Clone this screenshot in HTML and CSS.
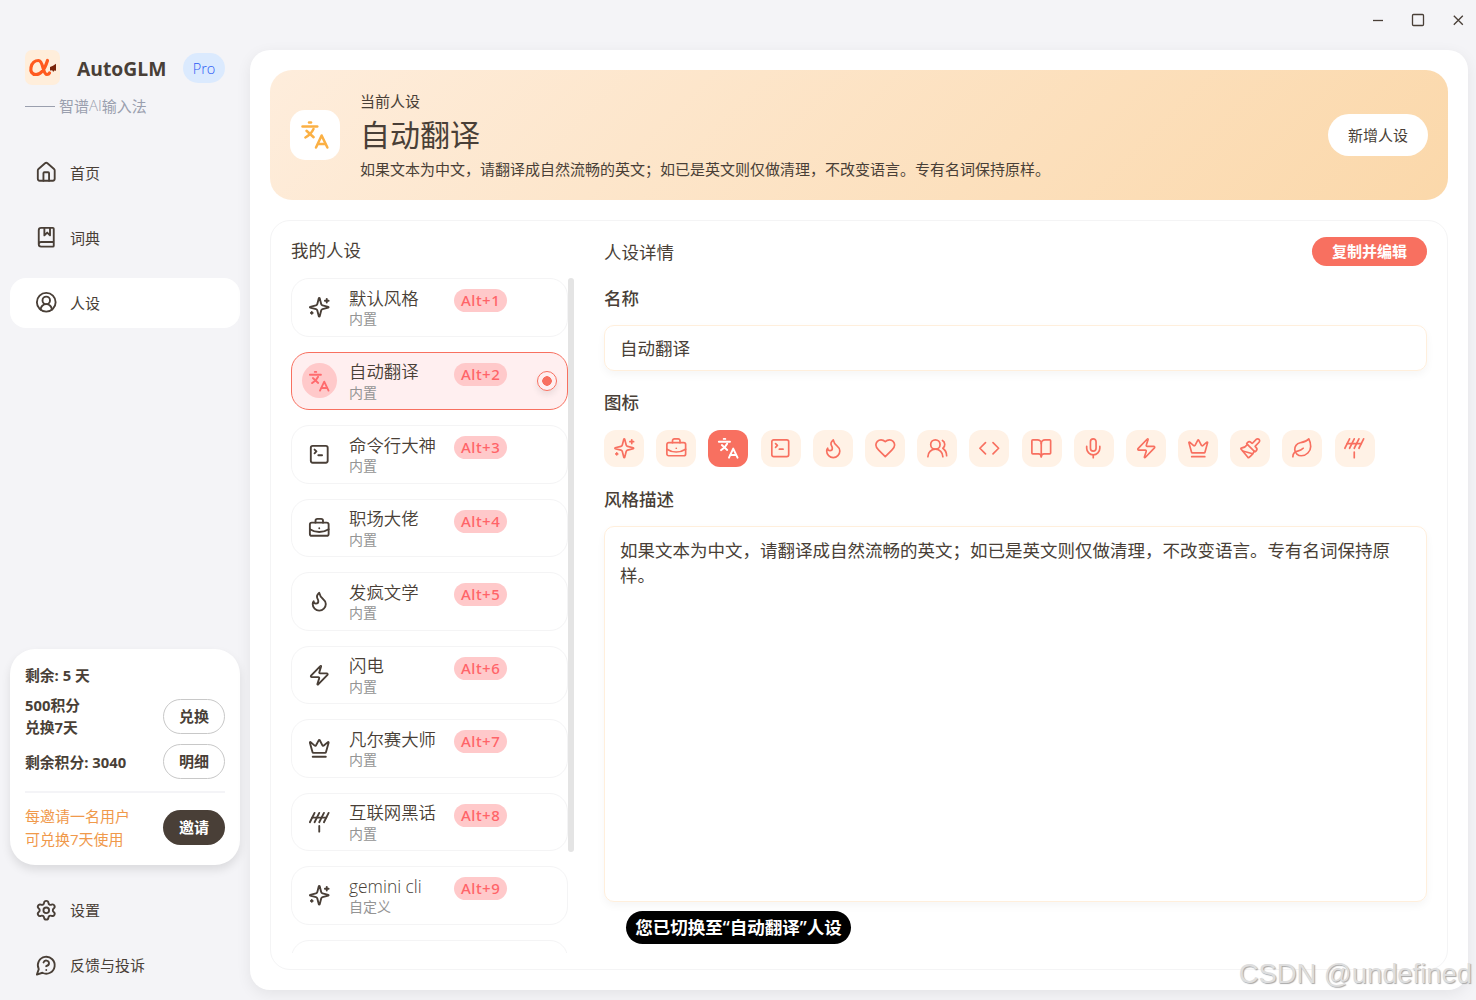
FILE: index.html
```html
<!DOCTYPE html>
<html lang="zh-CN">

<head>
    <meta charset="UTF-8">
    <title>AutoGLM</title>
    <link rel="stylesheet" href="styles.css">
</head>

<body>
    <!-- 图标 -->
    <svg class="sprite">
        <symbol id="i-home" viewBox="0 0 24 24">
            <path d="M15 21v-8a1 1 0 0 0-1-1h-4a1 1 0 0 0-1 1v8" />
            <path d="M3 10a2 2 0 0 1 .709-1.528l7-5.999a2 2 0 0 1 2.582 0l7 5.999A2 2 0 0 1 21 10v9a2 2 0 0 1-2 2H5a2 2 0 0 1-2-2z" />
        </symbol>
        <symbol id="i-dict" viewBox="0 0 24 24">
            <path d="M10 2v8l3-3 3 3V2" />
            <path d="M4 19.5v-15A2.5 2.5 0 0 1 6.5 2H19a1 1 0 0 1 1 1v18a1 1 0 0 1-1 1H6.5a1 1 0 0 1 0-5H20" />
        </symbol>
        <symbol id="i-user" viewBox="0 0 24 24">
            <path d="M18 20a6 6 0 0 0-12 0" />
            <circle cx="12" cy="10" r="4" />
            <circle cx="12" cy="12" r="10" />
        </symbol>
        <symbol id="i-setting" viewBox="0 0 24 24">
            <path d="M9.671 4.136a2.34 2.34 0 0 1 4.659 0 2.34 2.34 0 0 0 3.319 1.915 2.34 2.34 0 0 1 2.33 4.033 2.34 2.34 0 0 0 0 3.831 2.34 2.34 0 0 1-2.33 4.033 2.34 2.34 0 0 0-3.319 1.915 2.34 2.34 0 0 1-4.659 0 2.34 2.34 0 0 0-3.32-1.915 2.34 2.34 0 0 1-2.33-4.033 2.34 2.34 0 0 0 0-3.831A2.34 2.34 0 0 1 6.35 6.051a2.34 2.34 0 0 0 3.319-1.915" />
            <circle cx="12" cy="12" r="3" />
        </symbol>
        <symbol id="i-help" viewBox="0 0 24 24">
            <path d="M7.9 20A9 9 0 1 0 4 16.1L2 22Z" />
            <path d="M9.09 9a3 3 0 0 1 5.83 1c0 2-3 3-3 3" />
            <path d="M12 17h.01" />
        </symbol>
        <symbol id="i-sparkles" viewBox="0 0 24 24">
            <path d="M9.937 15.5A2 2 0 0 0 8.5 14.063l-6.135-1.582a.5.5 0 0 1 0-.962L8.5 9.936A2 2 0 0 0 9.937 8.5l1.582-6.135a.5.5 0 0 1 .963 0L14.063 8.5A2 2 0 0 0 15.5 9.937l6.135 1.581a.5.5 0 0 1 0 .964L15.5 14.063a2 2 0 0 0-1.437 1.437l-1.582 6.135a.5.5 0 0 1-.963 0z" />
            <path d="M20 3v4" />
            <path d="M22 5h-4" />
            <path d="M4 17v2" />
            <path d="M5 18H3" />
        </symbol>
        <symbol id="i-translate" viewBox="0 0 24 24">
            <path d="M2 5.100h11.800" />
            <path d="M7.200 2h1.600" />
            <path d="m5.200 8.600 5.700 5.200" />
            <path d="M10.800 7.200C9.400 10.200 7.200 12.400 4.300 14" />
            <path d="m12.800 22 4.500-9.600L21.900 22" />
            <path d="M14.500 19.200h5.600" />
        </symbol>
        <symbol id="i-terminal" viewBox="0 0 24 24">
            <path d="m7 11 2-2-2-2" />
            <path d="M11 13h4" />
            <rect x="3" y="3" width="18" height="18" rx="2" />
        </symbol>
        <symbol id="i-work" viewBox="0 0 24 24">
            <path d="M12 12h.01" />
            <path d="M16 6V4a2 2 0 0 0-2-2h-4a2 2 0 0 0-2 2v2" />
            <path d="M22 13a18.15 18.15 0 0 1-20 0" />
            <rect x="2" y="6" width="20" height="14" rx="2" />
        </symbol>
        <symbol id="i-flame" viewBox="0 0 24 24">
            <path d="M8.5 14.5A2.5 2.5 0 0 0 11 12c0-1.38-.5-2-1-3-1.072-2.143-.224-4.054 2-6 .5 2.5 2 4.9 4 6.5 2 1.6 3 3.5 3 5.5a7 7 0 1 1-14 0c0-1.153.433-2.294 1-3a2.5 2.5 0 0 0 2.5 2.5z" />
        </symbol>
        <symbol id="i-zap" viewBox="0 0 24 24">
            <path d="M4 14a1 1 0 0 1-.78-1.63l9.9-10.2a.5.5 0 0 1 .86.46l-1.92 6.02A1 1 0 0 0 13 10h7a1 1 0 0 1 .78 1.63l-9.9 10.2a.5.5 0 0 1-.86-.46l1.92-6.02A1 1 0 0 0 11 14z" />
        </symbol>
        <symbol id="i-crown" viewBox="0 0 24 24">
            <path d="M11.562 3.266a.5.5 0 0 1 .876 0L15.39 8.87a1 1 0 0 0 1.516.294L21.183 5.5a.5.5 0 0 1 .798.519l-2.834 10.246a1 1 0 0 1-.956.734H5.81a1 1 0 0 1-.957-.734L2.02 6.02a.5.5 0 0 1 .798-.519l4.276 3.664a1 1 0 0 0 1.516-.294z" />
            <path d="M5 21h14" />
        </symbol>
        <symbol id="i-antenna" viewBox="0 0 24 24">
            <path d="M2 12 7 2" />
            <path d="m7 12 5-10" />
            <path d="m12 12 5-10" />
            <path d="m17 12 5-10" />
            <path d="M4.5 7h15" />
            <path d="M12 16v6" />
        </symbol>
        <symbol id="i-heart" viewBox="0 0 24 24">
            <path d="M19 14c1.49-1.46 3-3.21 3-5.5A5.5 5.5 0 0 0 16.5 3c-1.76 0-3 .5-4.5 2-1.5-1.5-2.74-2-4.5-2A5.5 5.5 0 0 0 2 8.5c0 2.3 1.5 4.05 3 5.5l7 7Z" />
        </symbol>
        <symbol id="i-users" viewBox="0 0 24 24">
            <path d="M18 21a8 8 0 0 0-16 0" />
            <circle cx="10" cy="8" r="5" />
            <path d="M22 20c0-3.37-2-6.5-4-8a5 5 0 0 0-.45-8.3" />
        </symbol>
        <symbol id="i-code" viewBox="0 0 24 24">
            <path d="m16 18 6-6-6-6" />
            <path d="m8 6-6 6 6 6" />
        </symbol>
        <symbol id="i-book" viewBox="0 0 24 24">
            <path d="M12 7v14" />
            <path d="M3 18a1 1 0 0 1-1-1V4a1 1 0 0 1 1-1h5a4 4 0 0 1 4 4 4 4 0 0 1 4-4h5a1 1 0 0 1 1 1v13a1 1 0 0 1-1 1h-6a3 3 0 0 0-3 3 3 3 0 0 0-3-3z" />
        </symbol>
        <symbol id="i-mic" viewBox="0 0 24 24">
            <path d="M12 2a3 3 0 0 0-3 3v7a3 3 0 0 0 6 0V5a3 3 0 0 0-3-3Z" />
            <path d="M19 10v2a7 7 0 0 1-14 0v-2" />
            <path d="M12 19v3" />
        </symbol>
        <symbol id="i-brush" viewBox="0 0 24 24">
            <path d="m14.622 17.897-10.68-2.913" />
            <path d="M18.376 2.622a1 1 0 1 1 3.002 3.002L17.36 9.643a.5.5 0 0 0 0 .707l.944.944a2.41 2.41 0 0 1 0 3.408l-.944.944a.5.5 0 0 1-.707 0L8.354 7.348a.5.5 0 0 1 0-.707l.944-.944a2.41 2.41 0 0 1 3.408 0l.944.944a.5.5 0 0 0 .707 0z" />
            <path d="M9 8c-1.804 2.71-3.97 3.46-6.583 3.948a.507.507 0 0 0-.302.819l7.32 8.883a1 1 0 0 0 1.185.204C12.735 20.405 16 16.792 16 15" />
        </symbol>
        <symbol id="i-leaf" viewBox="0 0 24 24">
            <path d="M11 20A7 7 0 0 1 9.8 6.1C15.5 5 17 4.48 19 2c1 2 2 4.18 2 8 0 5.5-4.78 10-10 10Z" />
            <path d="M2 21c0-3 1.85-5.36 5.08-6C9.5 14.52 12 13 13 12" />
        </symbol>
    </svg>

    <!-- 左侧导航 -->
    <div class="sidebar">
        <div class="brand">
            <svg class="logo" viewBox="0 0 35 35">
                <path class="logo-a" d="M22.500 10.500C20.500 17 17 24.500 11 24.500C7 24.500 5.200 21.500 6 17.500C6.800 13 10 10.500 13.500 10.500C18.500 10.500 17.500 24.500 22 24.500C23.500 24.500 24 24 24.500 23" />
                <path class="logo-b" d="m25 17 3-1.300 3-2v7l-1.800-.300-1 1.500-1-1.700-2.200.300z" />
            </svg>
            <h1>AutoGLM</h1>
            <span class="pro">Pro</span>
        </div>
        <p class="slogan"><i></i>智谱<span>AI</span>输入法</p>

        <ul class="nav">
            <li><svg class="icon"><use href="#i-home" /></svg>首页</li>
            <li><svg class="icon"><use href="#i-dict" /></svg>词典</li>
            <li class="active"><svg class="icon"><use href="#i-user" /></svg>人设</li>
        </ul>

        <div class="account">
            <p class="days">剩余: 5 天</p>
            <div class="row row1">
                <p>500积分<br>兑换7天</p>
                <button>兑换</button>
            </div>
            <div class="row row2">
                <p>剩余积分: 3040</p>
                <button>明细</button>
            </div>
            <div class="row invite">
                <p>每邀请一名用户<br>可兑换7天使用</p>
                <button class="dark">邀请</button>
            </div>
        </div>

        <ul class="nav nav-bottom">
            <li><svg class="icon"><use href="#i-setting" /></svg>设置</li>
            <li><svg class="icon"><use href="#i-help" /></svg>反馈与投诉</li>
        </ul>
    </div>

    <div class="right">
        <div class="titlebar">
            <svg viewBox="0 0 14 14"><path d="M2 7.500h10" /></svg>
            <svg viewBox="0 0 14 14"><rect x="1.500" y="1.500" width="11" height="11" rx="1" /></svg>
            <svg viewBox="0 0 14 14"><path d="m2.800 2.800 9 9M11.800 2.800l-9 9" /></svg>
        </div>

        <div class="main">
            <!-- 当前人设 -->
            <div class="banner">
                <div class="banner-icon"><svg class="icon"><use href="#i-translate" /></svg></div>
                <div class="banner-text">
                    <p>当前人设</p>
                    <h2>自动翻译</h2>
                    <p>如果文本为中文，请翻译成自然流畅的英文；如已是英文则仅做清理，不改变语言。专有名词保持原样。</p>
                </div>
                <button>新增人设</button>
            </div>

            <div class="content">
                <div class="mine">
                    <h3>我的人设</h3>
                    <div class="scroll">
                        <ul class="list">
                            <li>
                                <span class="avatar"><svg class="icon"><use href="#i-sparkles" /></svg></span>
                                <div class="name"><b>默认风格</b><small>内置</small></div>
                                <span class="key">Alt+1</span>
                            </li>
                            <li class="active">
                                <span class="avatar"><svg class="icon"><use href="#i-translate" /></svg></span>
                                <div class="name"><b>自动翻译</b><small>内置</small></div>
                                <span class="key">Alt+2</span>
                                <span class="radio"></span>
                            </li>
                            <li>
                                <span class="avatar"><svg class="icon"><use href="#i-terminal" /></svg></span>
                                <div class="name"><b>命令行大神</b><small>内置</small></div>
                                <span class="key">Alt+3</span>
                            </li>
                            <li>
                                <span class="avatar"><svg class="icon"><use href="#i-work" /></svg></span>
                                <div class="name"><b>职场大佬</b><small>内置</small></div>
                                <span class="key">Alt+4</span>
                            </li>
                            <li>
                                <span class="avatar"><svg class="icon"><use href="#i-flame" /></svg></span>
                                <div class="name"><b>发疯文学</b><small>内置</small></div>
                                <span class="key">Alt+5</span>
                            </li>
                            <li>
                                <span class="avatar"><svg class="icon"><use href="#i-zap" /></svg></span>
                                <div class="name"><b>闪电</b><small>内置</small></div>
                                <span class="key">Alt+6</span>
                            </li>
                            <li>
                                <span class="avatar"><svg class="icon"><use href="#i-crown" /></svg></span>
                                <div class="name"><b>凡尔赛大师</b><small>内置</small></div>
                                <span class="key">Alt+7</span>
                            </li>
                            <li>
                                <span class="avatar"><svg class="icon"><use href="#i-antenna" /></svg></span>
                                <div class="name"><b>互联网黑话</b><small>内置</small></div>
                                <span class="key">Alt+8</span>
                            </li>
                            <li>
                                <span class="avatar"><svg class="icon"><use href="#i-sparkles" /></svg></span>
                                <div class="name"><b>gemini cli</b><small>自定义</small></div>
                                <span class="key">Alt+9</span>
                            </li>
                            <li></li>
                        </ul>
                        <div class="bar"></div>
                    </div>
                </div>

                <div class="detail">
                    <div class="detail-head">
                        <h3>人设详情</h3>
                        <button>复制并编辑</button>
                    </div>
                    <label>名称</label>
                    <div class="field">自动翻译</div>
                    <label>图标</label>
                    <div class="icons">
                        <span><svg class="icon"><use href="#i-sparkles" /></svg></span>
                        <span><svg class="icon"><use href="#i-work" /></svg></span>
                        <span class="active"><svg class="icon"><use href="#i-translate" /></svg></span>
                        <span><svg class="icon"><use href="#i-terminal" /></svg></span>
                        <span><svg class="icon"><use href="#i-flame" /></svg></span>
                        <span><svg class="icon"><use href="#i-heart" /></svg></span>
                        <span><svg class="icon"><use href="#i-users" /></svg></span>
                        <span><svg class="icon"><use href="#i-code" /></svg></span>
                        <span><svg class="icon"><use href="#i-book" /></svg></span>
                        <span><svg class="icon"><use href="#i-mic" /></svg></span>
                        <span><svg class="icon"><use href="#i-zap" /></svg></span>
                        <span><svg class="icon"><use href="#i-crown" /></svg></span>
                        <span><svg class="icon"><use href="#i-brush" /></svg></span>
                        <span><svg class="icon"><use href="#i-leaf" /></svg></span>
                        <span><svg class="icon"><use href="#i-antenna" /></svg></span>
                    </div>
                    <label>风格描述</label>
                    <div class="field desc">如果文本为中文，请翻译成自然流畅的英文；如已是英文则仅做清理，不改变语言。专有名词保持原样。</div>
                </div>
            </div>
        </div>
    </div>

    <div class="toast">您已切换至“自动翻译”人设</div>
    <div class="watermark">CSDN @undefined</div>
</body>

</html>
```

FILE: styles.css
```css
* {
    margin: 0;
    padding: 0;
    box-sizing: border-box;
}

body {
    display: flex;
    height: 1000px;
    overflow: hidden;
    position: relative;
    background-color: #f4f4f7;
    color: #493f37;
    font-family: "Open Sans", "Noto Sans CJK SC", sans-serif;
    font-size: 15px;
}

ul {
    list-style: none;
}

button {
    border: none;
    padding-bottom: 2px;
    font-family: inherit;
    font-size: 15px;
    color: inherit;
}

.sprite {
    display: none;
}

.icon {
    width: 22.5px;
    height: 22.5px;
    flex: none;
    fill: none;
    stroke: currentColor;
    stroke-width: 2;
    stroke-linecap: round;
    stroke-linejoin: round;
}

/* 左侧 */
.sidebar {
    width: 250px;
    padding: 50px 10px 10px;
    display: flex;
    flex-direction: column;
}

.brand {
    display: flex;
    align-items: center;
    height: 35px;
    padding-left: 15px;
}

.logo {
    width: 35px;
    height: 35px;
    border-radius: 7px;
    background-color: #ffeedb;
}

.logo-a {
    fill: none;
    stroke: #ff5a1f;
    stroke-width: 3.2;
    stroke-linecap: round;
}

.logo-b {
    fill: #7a2408;
}

.brand h1 {
    margin-left: 17px;
    width: 106px;
    font-size: 19.3px;
    font-weight: 700;
    line-height: 30px;
    padding-top: 2px;
}

.pro {
    width: 42px;
    height: 30px;
    line-height: 31px;
    margin-top: 1px;
    border-radius: 15px;
    text-align: center;
    font-size: 14.5px;
    font-weight: 350;
    color: #2b5cf5;
    background-color: #dbeafe;
}

.slogan {
    display: flex;
    align-items: center;
    height: 22px;
    margin: 9px 0 32px 15px;
    color: #9a9fae;
}

.slogan i {
    width: 30px;
    height: 1px;
    margin: 2px 4px 0 0;
    background-color: #9a9fae;
}

.slogan span {
    font-weight: 350;
}

.nav li {
    display: flex;
    align-items: center;
    height: 50px;
    margin-bottom: 15px;
    padding: 0 0 1px 25px;
    border-radius: 16px;
}

.nav li .icon {
    margin-right: 12.5px;
}

.nav .active {
    background-color: #fff;
}

.nav-bottom {
    margin-top: 20px;
}

.nav-bottom li {
    margin-bottom: 5px;
}

.nav-bottom li .icon {
    margin-top: 2px;
}

.nav-bottom li:last-child {
    margin-bottom: 0;
}

.account {
    margin-top: auto;
    height: 216px;
    padding: 15px;
    border-radius: 25px;
    background-color: #fff;
    box-shadow: 0 5px 10px rgba(0, 0, 0, .1);
    font-size: 15px;
    font-weight: 700;
    line-height: 22px;
}

/* 文字略小于按钮 */
.days,
.row1 p,
.row2 p {
    font-size: 14.8px;
}

.row {
    display: flex;
    justify-content: space-between;
    align-items: center;
}

.row1 {
    height: 46px;
    margin-top: 7px;
}

.row2 {
    height: 35px;
    margin-top: 5px;
}

.account button {
    width: 62px;
    height: 35px;
    border: 1px solid #c8c8c8;
    border-radius: 18px;
    background-color: #fff;
    font-size: 15px;
    font-weight: 700;
}

.account .dark {
    border: none;
    background-color: #493f37;
    color: #fff;
}

.invite {
    margin-top: 12px;
    padding-top: 11px;
    border-top: 2px solid #f4f4f7;
    color: #f0994b;
    font-size: 15px;
    font-weight: 400;
    line-height: 23px;
}

.invite p {
    padding-top: 1px;
}

/* 右侧 */
.right {
    flex: 1;
    padding: 0 8px 10px 0;
    display: flex;
    flex-direction: column;
}

.titlebar {
    display: flex;
    justify-content: flex-end;
    align-items: center;
    gap: 26px;
    height: 50px;
    padding: 0 3px 10px 0;
}

.titlebar svg {
    width: 14px;
    height: 14px;
    fill: none;
    stroke: #493f37;
    stroke-width: 1.3;
}

.main {
    flex: 1;
    padding: 20px;
    border-radius: 20px;
    background-color: #fff;
    box-shadow: 0 4px 15px rgba(0, 0, 0, .07);
    display: flex;
    flex-direction: column;
    gap: 20px;
}

.banner {
    display: flex;
    align-items: center;
    height: 130px;
    padding: 0 20px;
    border-radius: 22px;
    background: linear-gradient(135deg, #feeddc, #fbd8aa);
}

.banner-icon {
    display: flex;
    align-items: center;
    justify-content: center;
    width: 50px;
    height: 50px;
    border-radius: 15px;
    background-color: #fff;
    color: #fbb044;
}

.banner-icon .icon {
    width: 30px;
    height: 30px;
}

.banner-text {
    flex: 1;
    margin-left: 20px;
    line-height: 22px;
}

.banner-text h2 {
    font-size: 30px;
    font-weight: 400;
    line-height: 46px;
}

.banner button {
    width: 100px;
    height: 42px;
    border-radius: 21px;
    background-color: #fff;
}

.content {
    flex: 1;
    display: flex;
    padding: 16px 20px;
    border: 1px solid #f4f4f5;
    border-radius: 20px;
}

h3 {
    font-size: 17.5px;
    font-weight: 400;
    line-height: 26px;
}

.mine {
    width: 283px;
}

.mine h3 {
    margin-bottom: 15px;
}

.scroll {
    display: flex;
    height: 675px;
    overflow: hidden;
}

.list {
    width: 277px;
}

.list li {
    display: flex;
    align-items: center;
    height: 58.5px;
    margin-bottom: 15px;
    padding: 0 10px;
    border: 1px solid #f4f4f5;
    border-radius: 18px;
}

.list .active {
    border-color: #f87060;
    background-color: #ffeff0;
}

.avatar {
    display: flex;
    align-items: center;
    justify-content: center;
    width: 35px;
    height: 35px;
    border-radius: 50%;
}

.active .avatar {
    background-color: #ffc9ca;
    color: #ff6b6e;
}

.name {
    width: 105px;
    margin-left: 12px;
    padding-top: 2px;
}

.name b {
    display: block;
    font-size: 17.4px;
    font-weight: 350;
    line-height: 21.5px;
}

.name small {
    display: block;
    font-size: 14px;
    line-height: 19.5px;
    color: #949494;
}

.key {
    align-self: flex-start;
    margin-top: 10px;
    padding: 0 6.5px 0 7px;
    height: 23px;
    line-height: 23.5px;
    border-radius: 12px;
    font-family: "Noto Sans", sans-serif;
    font-size: 15px;
    font-weight: 500;
    letter-spacing: .5px;
    background-color: #ffc9ca;
    color: #ff6468;
}

.radio {
    width: 20px;
    height: 20px;
    margin-left: auto;
    border: 1px solid #f87060;
    border-radius: 50%;
    background: radial-gradient(circle, #f87060 4.5px, #ffeff0 5px);
    box-shadow: 0 4px 6px rgba(0, 0, 0, .08);
}

.bar {
    width: 6px;
    height: 574px;
    border-radius: 3px;
    background-color: #e4e4e4;
}

.detail {
    flex: 1;
    margin-left: 30px;
    display: flex;
    flex-direction: column;
}

.detail-head {
    display: flex;
    justify-content: space-between;
    align-items: center;
    height: 29px;
}

.detail-head button {
    width: 115px;
    height: 29px;
    border-radius: 15px;
    background-color: #f87060;
    color: #fff;
    font-weight: 700;
}

label {
    font-size: 17.5px;
    font-weight: 500;
    line-height: 26px;
    margin: 19px 0 14px;
}

.field {
    height: 46px;
    padding: 10px 15px;
    border: 1px solid #ffefdc;
    border-radius: 10px;
    box-shadow: 0 4px 8px rgba(0, 0, 0, .04);
    font-size: 17.5px;
    line-height: 25px;
}

.field + label {
    margin: 18px 0 15px;
}

.icons {
    display: flex;
    gap: 12.2px;
}

.icons span {
    display: flex;
    align-items: center;
    justify-content: center;
    width: 40px;
    height: 37px;
    border-radius: 12px;
    background-color: #fff2e6;
    color: #f87060;
}

.icons .icon {
    stroke-width: 1.8;
}

.icons .active {
    background-color: #f87060;
    color: #fff;
}

.icons .active .icon {
    stroke-width: 2.1;
}

.icons + label {
    margin: 19px 0 14px;
}

.desc {
    height: 376px;
    padding-top: 11px;
}

/* 提示 */
.toast {
    position: absolute;
    left: 626px;
    top: 911px;
    width: 225px;
    height: 33px;
    line-height: 32px;
    border-radius: 17px;
    text-align: center;
    white-space: nowrap;
    font-size: 17.5px;
    font-weight: 600;
    background-color: #000;
    color: #fff;
}

.watermark {
    position: absolute;
    right: 4px;
    bottom: 10px;
    font-family: "Liberation Sans", Arial, sans-serif;
    font-size: 27.4px;
    line-height: 32px;
    color: #dedede;
    text-shadow: 1px 1px 1px #a8a8a8;
}
```
